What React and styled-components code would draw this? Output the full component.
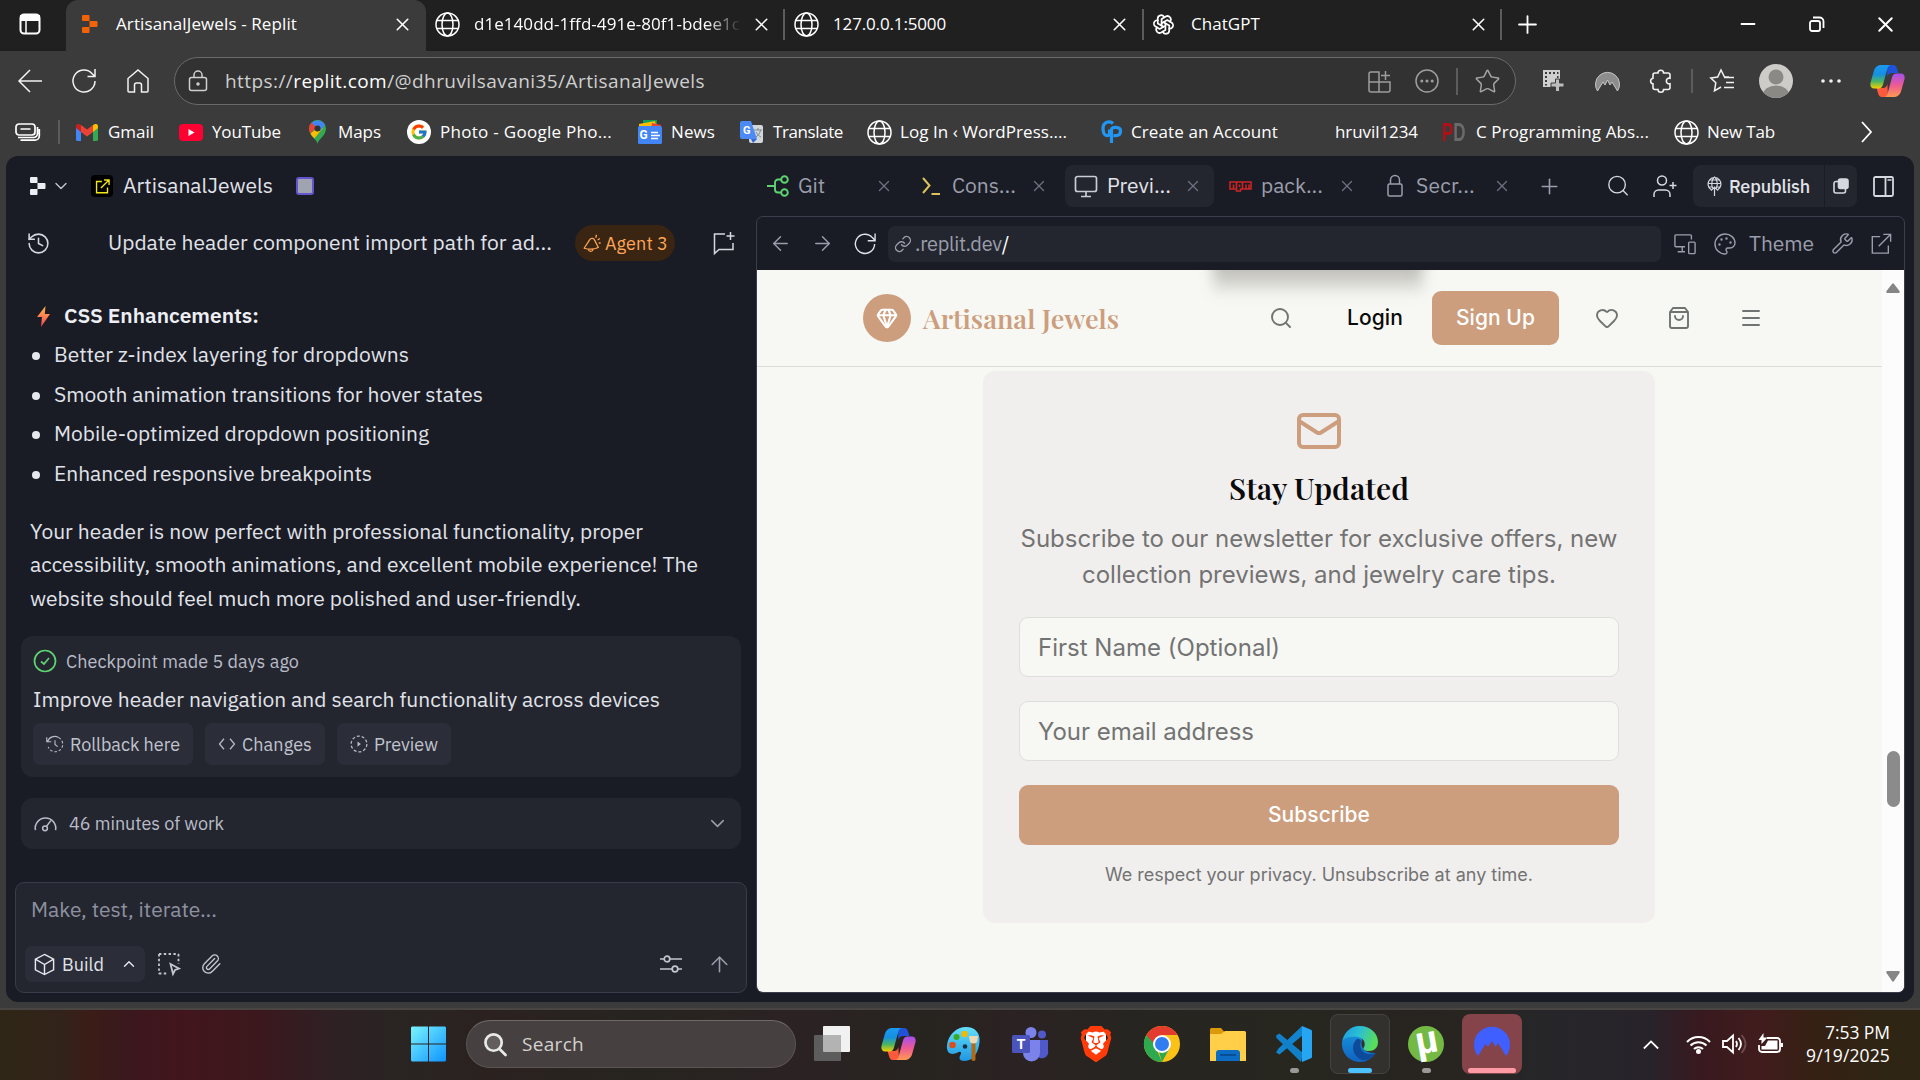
import React, { useLayoutEffect, useRef, useState } from "react";
import styled, { createGlobalStyle } from "styled-components";
import {
  ArrowLeft, ArrowRight, ArrowUp, ChevronDown, ChevronUp, Gem, Heart, History,
  Mail, Menu, Minus, Palette, Paperclip, Plus, Search, Star, Wrench, X, Link,
} from "lucide-react";
import { FcGoogle } from "react-icons/fc";
import { TbBrandOpenai } from "react-icons/tb";
import { SiBrave } from "react-icons/si";

const ui = `"Segoe UI", "Open Sans", "Noto Sans", sans-serif`;
const plex = `"IBM Plex Sans", Roboto, sans-serif`;
const inter = `Inter, "Liberation Sans", sans-serif`;
const serif = `"Playfair Display", "Liberation Serif", serif`;

const GlobalStyle = createGlobalStyle`
  * { box-sizing: border-box; }
  html, body { margin: 0; width: 1920px; height: 1080px; overflow: hidden; background: #3b3b3b; }
  svg { display: block; flex: none; }
`;

/* ---------- text that keeps its measured width ---------- */
const LabelText = styled.span`
  display: block;
  flex: none;
  width: ${(p) => p.$w}px;
  margin-left: ${(p) => p.$ml || 0}px;
  font-family: ${(p) => p.$font || ui};
  font-size: ${(p) => p.$size || 17}px;
  font-weight: ${(p) => p.$weight || 400};
  color: ${(p) => p.$color || "#fff"};
  line-height: 1.3;
  white-space: pre;
  position: relative;
  top: ${(p) => p.$dy || 0}px;
`;

function Label({ w, ml, font, size, weight, color, dy, children }) {
  const ref = useRef(null);
  const [spacing, setSpacing] = useState(0);
  useLayoutEffect(() => {
    const range = document.createRange();
    range.selectNodeContents(ref.current);
    const natural = range.getBoundingClientRect().width;
    const count = ref.current.textContent.length;
    setSpacing((w - natural) / count);
  }, [w]);
  return (
    <LabelText ref={ref} $w={w} $ml={ml} $font={font} $size={size} $weight={weight} $color={color} $dy={dy}
      style={{ letterSpacing: `${spacing}px` }}>
      {children}
    </LabelText>
  );
}

/* ---------- shared parts ---------- */
const Glyph = styled.span`
  display: flex;
  flex: none;
  align-items: center;
  justify-content: center;
  width: ${(p) => p.$w}px;
  height: ${(p) => p.$h || p.$w}px;
  margin-left: ${(p) => p.$ml || 0}px;
  color: ${(p) => p.$color || "inherit"};
`;
const Line = styled.svg.attrs((p) => ({ viewBox: p.viewBox || "0 0 24 24", fill: "none", stroke: "currentColor" }))`
  width: ${(p) => p.$s || 24}px;
  height: ${(p) => p.$h || p.$s || 24}px;
  stroke-width: ${(p) => p.$sw || 1.5};
  overflow: visible;
`;
const Rule = styled.i`
  flex: none;
  width: 2px;
  height: ${(p) => p.$h}px;
  margin-left: ${(p) => p.$ml}px;
  background: #5c5c5c;
`;

const Globe = () => (
  <Line $s={25} $sw={1.5} viewBox="0 0 25 25">
    <circle cx="12.5" cy="12.5" r="11.5" />
    <ellipse cx="12.5" cy="12.5" rx="5.5" ry="11.5" />
    <path d="M2 8.5h21M2 16.5h21" />
  </Line>
);
const ReplitMark = () => (
  <svg width="16" height="18" viewBox="0 0 16 18" fill="currentColor">
    <path d="M0 1a1 1 0 0 1 1-1h5.500a1 1 0 0 1 1 1v5H1a1 1 0 0 1-1-1zM7.500 6H14.500a1 1 0 0 1 1 1v4a1 1 0 0 1-1 1H7.500zM0 13a1 1 0 0 1 1-1h6.500v5a1 1 0 0 1-1 1H1a1 1 0 0 1-1-1z" />
  </svg>
);
const CopilotMark = () => (
  <svg width="35" height="32" viewBox="0 0 35 32">
    <defs>
      <linearGradient id="cpA" x1="0" y1="0" x2="0" y2="1">
        <stop offset="0" stopColor="#1b9af0" /><stop offset=".4" stopColor="#1590e0" /><stop offset=".7" stopColor="#4cb562" /><stop offset="1" stopColor="#f5d000" />
      </linearGradient>
      <linearGradient id="cpB" x1="0" y1="0" x2="0" y2="1">
        <stop offset="0" stopColor="#a34ff0" /><stop offset=".5" stopColor="#ee5a94" /><stop offset="1" stopColor="#ff9a50" />
      </linearGradient>
    </defs>
    <path d="M17 0h6c2.500 0 3.500 1.500 4.200 4l1.300 4h-6c-3 0-4.500 1.500-5.200 4z" fill="#1f52d6" />
    <path d="M18 32h-6c-2.500 0-3.200-1.500-4-4l-1.500-5h6.500c2.500 0 3.600-1.500 4.400-4z" fill="#fb5a3c" />
    <path d="M12 0h9c-2 0-3 1.500-3.600 3.600L13 19.500c-.8 2.500-2 4-4.500 4H4.200C.8 23.500-.2 20.800.6 17.500L4 5.500C5.200 2 7.500 0 12 0z" fill="url(#cpA)" />
    <path d="M23 32h-9c2 0 3-1.500 3.600-3.600L22 12.500c.8-2.500 2-4 4.500-4h4.300c3.400 0 4.400 2.700 3.600 6L31 26.500C29.800 30 27.500 32 23 32z" fill="url(#cpB)" />
  </svg>
);

/* ---------- browser chrome ---------- */
const Screen = styled.div`
  display: flex;
  flex-direction: column;
  width: 1920px;
  height: 1080px;
  overflow: hidden;
  color: #fff;
`;
const TabStrip = styled.header`
  display: flex;
  align-items: center;
  height: 51px;
  flex: none;
  padding-left: 18px;
  padding-bottom: 3px;
  background: #202020;
`;
const ActiveTab = styled.div`
  display: flex;
  align-items: center;
  align-self: flex-start;
  width: 360px;
  height: 51px;
  flex: none;
  margin-left: 24px;
  padding: 0 0 3px 16px;
  background: #3b3b3b;
  border-radius: 12px 12px 0 0;
`;
const FadeText = styled.div`
  flex: none;
  width: 270px;
  margin-left: 14px;
  mask-image: linear-gradient(90deg, #000 86%, transparent 99%);
`;
const Toolbar = styled.div`
  display: flex;
  align-items: center;
  height: 60px;
  flex: none;
  padding-left: 18px;
  color: #f2f2f2;
`;
const AddressBar = styled.div`
  display: flex;
  align-items: center;
  width: 1342px;
  height: 48px;
  margin-left: 24px;
  padding-left: 13px;
  border: 1.500px solid #6a6a6a;
  border-radius: 24px;
  background: #323232;
  color: #d0d0d0;
`;
const UrlPart = styled.span`color: ${(p) => (p.$strong ? "#fff" : "#cfcfcf")};`;
const Avatar = styled.span`
  flex: none;
  width: 34px;
  height: 34px;
  margin-left: 25px;
  border-radius: 50%;
  overflow: hidden;
  background: #cdccc9;
`;
const BookmarkBar = styled.div`
  display: flex;
  align-items: center;
  height: 42px;
  flex: none;
  padding-left: 15px;
  margin-bottom: 3px;
`;
const PdMark = styled.b`
  flex: none;
  width: 25px;
  margin-left: 24px;
  font: 900 25px/24px "Liberation Sans", sans-serif;
  color: #b01016;
  transform: scaleX(.68);
  transform-origin: 0 50%;
  span { color: #6a6a6a; }
`;

function BrowserTabs() {
  const close = (ml) => <Glyph $w={15} $ml={ml}><X size={21} strokeWidth={1.800} /></Glyph>;
  return (
    <TabStrip>
      <Glyph $w={24}>
        <Line $s={22} $sw={2} viewBox="0 0 22 22"><rect x="1.500" y="1.500" width="19" height="19" rx="3.500" /><path d="M2 3h18v4H2z" fill="currentColor" /><path d="M7 7v13" strokeWidth="1.500" /></Line>
      </Glyph>
      <ActiveTab>
        <Glyph $w={16} $color="#f26207"><ReplitMark /></Glyph>
        <Label ml={18} w={181}>ArtisanalJewels - Replit</Label>
        {close(98)}
      </ActiveTab>
      <Glyph $w={25} $ml={9}><Globe /></Glyph>
      <FadeText><Label w={266}>d1e140dd-1ffd-491e-80f1-bdee1c</Label></FadeText>
      {close(10)}
      <Rule $ml={14} $h={31} />
      <Glyph $w={25} $ml={9}><Globe /></Glyph>
      <Label ml={14} w={113}>127.0.0.1:5000</Label>
      {close(166)}
      <Rule $ml={15} $h={31} />
      <Glyph $w={24} $ml={7}><TbBrandOpenai size={23} strokeWidth={1.800} /></Glyph>
      <Label ml={16} w={69}>ChatGPT</Label>
      {close(211)}
      <Rule $ml={14} $h={31} />
      <Glyph $w={24} $ml={13}><Plus size={29} strokeWidth={1.500} /></Glyph>
      <Glyph $w={16} $ml={201}><Minus size={22} strokeWidth={2.200} /></Glyph>
      <Glyph $w={16} $ml={53}>
        <Line $s={16} $sw={1.800} viewBox="0 0 16 16"><rect x="1" y="5" width="10" height="10" rx="2" /><path d="M4 1.500h6.500a4 4 0 0 1 4 4V12" /></Line>
      </Glyph>
      <Glyph $w={16} $ml={52}><X size={25} strokeWidth={1.900} /></Glyph>
    </TabStrip>
  );
}

function AddressRow() {
  return (
    <Toolbar>
      <Glyph $w={24}><Line $s={24}><path d="M24 12H1M12 1 1 12l11 11" /></Line></Glyph>
      <Glyph $w={24} $ml={30}><Line $s={24}><path d="M23 12a11 11 0 1 1-2.800-7.300L23 7.500M23 0v7.500h-7.500" /></Line></Glyph>
      <Glyph $w={24} $ml={30}><Line $s={24}><path d="M2 22V9.500L12 1l10 8.500V22a1 1 0 0 1-1 1h-5.500v-7a2 2 0 0 0-2-2h-3a2 2 0 0 0-2 2v7H3a1 1 0 0 1-1-1z" /></Line></Glyph>
      <AddressBar>
        <Glyph $w={20}>
          <Line $s={20} $h={22} viewBox="0 0 20 22"><rect x="1.500" y="7.500" width="17" height="13" rx="2" /><path d="M6 7.500V5a4 4 0 0 1 8 0v2.500" /><circle cx="10" cy="14" r="1" fill="currentColor" /></Line>
        </Glyph>
        <Label ml={17} w={480} size={19}>
          <UrlPart>https://</UrlPart><UrlPart $strong>replit.com</UrlPart><UrlPart>/@dhruvilsavani35/ArtisanalJewels</UrlPart>
        </Label>
        <Glyph $w={24} $ml={662} $color="#9d9d9d">
          <Line $s={23} viewBox="0 0 23 23"><path d="M3 2h8v20H3a2 2 0 0 1-2-2V4a2 2 0 0 1 2-2zM1 12h21v8a2 2 0 0 1-2 2h-9M17.500 1v9M13 5.500h9" /></Line>
        </Glyph>
        <Glyph $w={24} $ml={24} $color="#9d9d9d">
          <Line $s={24}><circle cx="12" cy="12" r="11" /><g fill="currentColor"><circle cx="6.800" cy="12" r=".8" /><circle cx="12" cy="12" r=".8" /><circle cx="17.200" cy="12" r=".8" /></g></Line>
        </Glyph>
        <Rule $ml={17} $h={27} />
        <Glyph $w={24} $ml={17} $color="#a5a5a5"><Star size={27} strokeWidth={1.300} /></Glyph>
      </AddressBar>
      <Glyph $w={22} $ml={27}>
        <svg width="22" height="22" viewBox="0 0 22 22">
          <path d="M0 0h17v9h-5v4H9v4H0z" fill="#cfcfcf" />
          <path d="M2 2h2v2H2zM6 2h2v2H6zM10 2h2v2h-2zM14 2h1.500v2H14zM2 6h2v2H2zM2 10h2v2H2zM2 14h2v1.500H2zM14 6h1.500v2H14z" fill="#3b3b3b" />
          <path d="M12.500 9h4v4H21v4h-4.500v4.500h-4V17H8v-4h4.500z" fill="#bdbdbd" stroke="#3b3b3b" />
        </svg>
      </Glyph>
      <Glyph $w={25} $ml={30}>
        <svg width="25" height="22" viewBox="0 0 25 22"><path d="M2.500 21a12 12 0 1 1 20 0L17 12l-2 3-2.500-5-2.500 5-2-3z" fill="#8d8d8d" stroke="#c6c6c6" /></svg>
      </Glyph>
      <Glyph $w={24} $ml={29}>
        <Line $s={24} $sw={1.600}><path d="M9 4a2.800 2.800 0 0 1 5.600 0H19a2 2 0 0 1 2 2v3.200a2.900 2.900 0 1 0 0 5.600V18.500a2 2 0 0 1-2 2H14.600a2.800 2.800 0 0 1-5.600 0H6a2 2 0 0 1-2-2V14.900a2.900 2.900 0 0 1 0-5.700V6a2 2 0 0 1 2-2z" /></Line>
      </Glyph>
      <Rule $ml={18} $h={24} />
      <Glyph $w={24} $ml={17}>
        <Line $s={24}><path d="M19 8h-4.500L11 1 7.700 8 .8 9l5 4.800-1.300 8L11 18M14 8.500h10M16 13.500h8M14 18.500h10" /></Line>
      </Glyph>
      <Avatar><svg width="34" height="34"><circle cx="17" cy="13" r="7.500" fill="#8b8985" /><ellipse cx="17" cy="31" rx="13" ry="9.500" fill="#8b8985" /></svg></Avatar>
      <Glyph $w={20} $ml={28}><svg width="20" height="4" fill="currentColor"><circle cx="2" cy="2" r="1.800" /><circle cx="10" cy="2" r="1.800" /><circle cx="18" cy="2" r="1.800" /></svg></Glyph>
      <Glyph $w={35} $ml={29}><CopilotMark /></Glyph>
    </Toolbar>
  );
}

function Bookmarks() {
  return (
    <BookmarkBar>
      <Glyph $w={25}>
        <Line $s={25} $h={18} $sw={1.700} viewBox="0 0 25 18"><rect x="1" y="1" width="19" height="11" rx="3" /><path d="M5.500 6h10M3 14.500h15.500a4 4 0 0 0 4-4V4M5.500 17.200H20a4.300 4.300 0 0 0 4.300-4.200V6" /></Line>
      </Glyph>
      <Rule $ml={18} $h={24} />
      <Glyph $w={22} $ml={16}>
        <svg width="22" height="17" viewBox="0 0 22 17"><path d="M0 2.500v13A1.500 1.500 0 0 0 1.500 17H5V6z" fill="#4285f4" /><path d="M22 2.500v13a1.500 1.500 0 0 1-1.500 1.500H17V6z" fill="#34a853" /><path d="M17 1v7l5-4V2c0-2-2.500-2.600-4-1.500z" fill="#fbbc04" /><path d="M5 8V1l6 4.500L17 1v7l-6 4.500z" fill="#ea4335" /><path d="M0 4l5 4V1L4 .5C2.500-.6 0 0 0 2z" fill="#c5221f" /></svg>
      </Glyph>
      <Label ml={10} w={46}>Gmail</Label>
      <Glyph $w={24} $ml={25}><svg width="24" height="17"><rect width="24" height="17" rx="4" fill="#ff0033" /><path d="M9.500 5v7l6-3.500z" fill="#fff" /></svg></Glyph>
      <Label ml={9} w={69}>YouTube</Label>
      <Glyph $w={17} $h={24} $ml={28}>
        <svg width="17" height="24" viewBox="0 0 17 24"><path d="M8.500 24C8 19 0 16 0 8.500A8.500 8.500 0 0 1 17 8.500C17 16 9 19 8.500 24z" fill="#34a853" /><path d="M1.500 13.500 11 3l-8-.8A8.500 8.500 0 0 0 1.500 13.500z" fill="#ea4335" /><path d="M1.500 13.500c1 2 2.500 3.500 3.800 5L14 8 11 6z" fill="#fbbc04" /><path d="M2.500 3A8.500 8.500 0 0 1 16 5l-5 6-6-6z" fill="#4285f4" /><circle cx="8.500" cy="8.500" r="3" fill="#333" /></svg>
      </Glyph>
      <Label ml={12} w={43}>Maps</Label>
      <Glyph $w={24} $ml={26}><svg width="24" height="24"><circle cx="12" cy="12" r="12" fill="#fff" /><g transform="translate(3 3)"><FcGoogle size={18} /></g></svg></Glyph>
      <Label ml={9} w={172}>Photo - Google Pho...</Label>
      <Glyph $w={24} $ml={26}>
        <svg width="24" height="24"><path d="M5 0h14v8H5z" fill="#0f9d58" /><path d="M1 4 17 1l2 8H1z" fill="#fbbc04" /><path d="m14 3 9 2-1 5h-9z" fill="#ea4335" /><rect y="6" width="24" height="18" rx="1.500" fill="#4285f4" /><text x="1.500" y="19" fontFamily="Roboto" fontWeight="700" fontSize="12" fill="#fff">G</text><path d="M13 12.500h7M13 15.500h9M13 18.500h7" stroke="#fff" strokeWidth="1.600" /></svg>
      </Glyph>
      <Label ml={9} w={44}>News</Label>
      <Glyph $w={24} $ml={25}>
        <svg width="24" height="24"><rect x="9" y="5" width="14" height="18" rx="2" fill="#d4d7da" /><path d="M2 1h9l6 18H2a2 2 0 0 1-2-2V3a2 2 0 0 1 2-2z" fill="#4c8bf5" /><path d="m11 19 6 0-4 4z" fill="#3367d6" /><text x="3" y="14" fontFamily="Roboto" fontWeight="700" fontSize="11" fill="#fff">G</text><path d="M14 10h8M18 8v2M20.500 10c-.5 4-3 6-5 7M16 12c1 2 3 4 5 5" stroke="#7b8794" fill="none" /></svg>
      </Glyph>
      <Label ml={9} w={70}>Translate</Label>
      <Glyph $w={25} $ml={24}><Globe /></Glyph>
      <Label ml={8} w={167}>Log In ‹ WordPress....</Label>
      <Glyph $w={22} $ml={34} $color="#2196f3">
        <Line $s={22} $h={24} $sw={3.200} viewBox="0 0 22 24"><path d="M12 3.500C9 .5 2 1.500 2 8.500s4 8 6.500 6.500V9.500" /><path d="M10.500 23V9.500c0-3 9-3 9 1.500s-3.500 5-7 4.500" /></Line>
      </Glyph>
      <Label ml={8} w={147}>Create an Account</Label>
      <Label ml={57} w={83}>hruvil1234</Label>
      <PdMark>P<span>D</span></PdMark>
      <Label ml={9} w={173}>C Programming Abs...</Label>
      <Glyph $w={25} $ml={25}><Globe /></Glyph>
      <Label ml={8} w={68}>New Tab</Label>
      <Glyph $w={12} $ml={86}><Line $s={12} $h={22} $sw={1.800} viewBox="0 0 12 22"><path d="m1 1 9 10-9 10" /></Line></Glyph>
    </BookmarkBar>
  );
}

/* ---------- workspace ---------- */
const Workspace = styled.main`
  display: flex;
  flex-direction: column;
  width: 1908px;
  height: 846px;
  flex: none;
  margin: 0 6px;
  border-radius: 12px;
  background: #1a1c25;
  color: #d6d8e0;
  overflow: hidden;
`;
const WorkspaceBar = styled.div`
  display: flex;
  align-items: center;
  height: 60px;
  flex: none;
  padding-left: 24px;
`;
const AppBadge = styled.span`
  display: flex;
  align-items: center;
  justify-content: center;
  flex: none;
  width: 22px;
  height: 22px;
  margin-left: 24px;
  border-radius: 4px;
  background: #000;
  color: #f5e616;
`;
const PurpleBox = styled.i`
  flex: none;
  width: 18px;
  height: 18px;
  margin-left: 23px;
  border: 2px solid #6554d0;
  border-radius: 3px;
  background: #a0a4b0;
`;
const ToolTab = styled.div`
  display: flex;
  align-items: center;
  flex: none;
  width: 149px;
  height: 42px;
  margin-left: 21px;
  padding-left: 9px;
  border-radius: 8px;
  background: #24262f;
`;
const Republish = styled.div`
  display: flex;
  flex: none;
  height: 42px;
  margin-left: 16px;
  gap: 1px;
  border-radius: 8px;
  overflow: hidden;
`;
const RepublishPart = styled.div`
  display: flex;
  align-items: center;
  width: ${(p) => p.$w}px;
  padding-left: ${(p) => p.$pl}px;
  background: #24262f;
`;
const Split = styled.div`
  display: flex;
  flex: 1;
  min-height: 0;
`;
const Chat = styled.section`
  display: flex;
  flex-direction: column;
  width: 750px;
  flex: none;
`;
const ChatHead = styled.div`
  display: flex;
  align-items: center;
  height: 54px;
  flex: none;
  padding-left: 20px;
`;
const AgentPill = styled.div`
  display: flex;
  align-items: center;
  width: 100px;
  height: 36px;
  margin-left: 23px;
  padding-left: 7px;
  border-radius: 18px;
  background: #3a2412;
  color: #ffa657;
`;
const Heading = styled.div`
  display: flex;
  align-items: center;
  height: 34px;
  flex: none;
  margin: 29px 0 2px 31px;
`;
const Bullets = styled.ul`
  display: flex;
  flex: none;
  flex-direction: column;
  margin: 0 0 21px;
  padding: 0 0 0 48px;
  list-style: none;
`;
const Bullet = styled.li`
  display: flex;
  align-items: center;
  height: 39.6px;
  &::before {
    content: "";
    width: 8px;
    height: 8px;
    margin: 3px 14px 0 -22px;
    border-radius: 50%;
    background: #e6e8ee;
  }
`;
const Paragraph = styled.div`
  display: grid;
  flex: none;
  grid-auto-rows: 33.600px;
  align-items: center;
  margin: 0 0 20.800px 24px;
`;
const Card = styled.div`
  width: 720px;
  height: ${(p) => p.$h}px;
  flex: none;
  margin: 0 0 21px 15px;
  padding: 0 12px;
  border-radius: 12px;
  background: #24262f;
`;
const CardRow = styled.div`
  display: flex;
  align-items: center;
  height: ${(p) => p.$h}px;
  padding-top: ${(p) => p.$pt || 0}px;
  gap: ${(p) => p.$gap || 0}px;
`;
const ActionButton = styled.div`
  display: flex;
  align-items: center;
  width: ${(p) => p.$w}px;
  height: 42px;
  padding-left: 12px;
  border-radius: 7px;
  background: #2b2d39;
  color: #b9bcc8;
`;
const Composer = styled.div`
  width: 732px;
  height: 111px;
  flex: none;
  margin: 12px 0 0 9px;
  padding: 13px 9px 0;
  border: 1.500px solid #393c4a;
  border-radius: 9px;
  background: #24262f;
`;
const ComposerTools = styled.div`
  display: flex;
  align-items: center;
  height: 36px;
  margin-top: 23px;
  color: #c3c6d0;
`;
const BuildButton = styled.div`
  display: flex;
  align-items: center;
  width: 120px;
  height: 36px;
  padding-left: 8px;
  border-radius: 7px;
  background: #2b2d39;
  color: #e8e9ef;
`;

const muted = "#9a9eac";
const PlexLabel = (p) => <Label font={plex} size={21} color="#e1e3ea" {...p} />;
const TabClose = ({ ml }) => <Glyph $w={11} $ml={ml} $color="#6d7180"><X size={18} strokeWidth={1.700} /></Glyph>;
const ExternalMark = ({ s = 22, sw = 1.5 }) => (
  <Line $s={s} $sw={sw}><path d="M11 4H2.500v18H20v-8.500M14.500 1.500H22.500V9.500M22 2 9.500 14.500" /></Line>
);

function WorkspaceHeader() {
  return (
    <WorkspaceBar>
      <Glyph $w={16} $color="#eceef4"><ReplitMark /></Glyph>
      <Glyph $w={12} $ml={9} $color="#c4c7d0"><ChevronDown size={20} strokeWidth={1.600} /></Glyph>
      <AppBadge><ExternalMark s={15} sw={2.200} /></AppBadge>
      <PlexLabel ml={10} w={150}>ArtisanalJewels</PlexLabel>
      <PurpleBox />
      <Glyph $w={22} $ml={453} $color="#5fd372">
        <Line $s={22} viewBox="0 0 22 22" $sw={1.900}><path d="M0 11h8M14 4.500h-3a3 3 0 0 0-3 3v7a3 3 0 0 0 3 3h3" /><circle cx="17.500" cy="4.500" r="3.300" /><circle cx="17.500" cy="17.500" r="3.300" /></Line>
      </Glyph>
      <PlexLabel ml={9} w={27} color={muted}>Git</PlexLabel>
      <TabClose ml={53} />
      <Glyph $w={18} $ml={33} $color="#dcc25c"><Line $s={18} $sw={2} viewBox="0 0 18 18"><path d="m1 1 6.500 7.500L1 16M9.500 17H18" /></Line></Glyph>
      <PlexLabel ml={12} w={64} color={muted}>Cons...</PlexLabel>
      <TabClose ml={17} />
      <ToolTab>
        <Glyph $w={24} $color="#c9ccd6"><Line $s={24} $sw={1.700}><path d="M3.500 2.500h17a2 2 0 0 1 2 2v11a2 2 0 0 1-2 2h-17a2 2 0 0 1-2-2v-11a2 2 0 0 1 2-2zM12 18v4M7 22.500h10" /></Line></Glyph>
        <PlexLabel ml={9} w={64}>Previ...</PlexLabel>
        <TabClose ml={16} />
      </ToolTab>
      <Glyph $w={23} $h={12} $ml={15} $color="#cb2424"><Line $s={23} $h={11} $sw={1.600} viewBox="0 0 23 11"><path d="M1 1h21v7H11.500v2H7.500V8H1zM4.500 8V3.500M7.500 8V1M10.500 3.500v2.500M13.500 8V1M17 8V3.500M20 8V3.500" /></Line></Glyph>
      <PlexLabel ml={9} w={62} color={muted}>pack...</PlexLabel>
      <TabClose ml={18} />
      <Glyph $w={16} $h={22} $ml={35} $color={muted}><Line $s={16} $h={22} viewBox="0 0 16 22"><rect x="1" y="9" width="14" height="12" rx="1.500" /><path d="M3.500 9V5a4.500 4.500 0 0 1 9 0v4" /></Line></Glyph>
      <PlexLabel ml={13} w={59} color={muted}>Secr...</PlexLabel>
      <TabClose ml={21} />
      <Glyph $w={18} $ml={33} $color={muted}><Plus size={25} strokeWidth={1.500} /></Glyph>
      <Glyph $w={22} $ml={49}><Line $s={22}><circle cx="11" cy="10.500" r="9" /><path d="m17.500 17 5 5" /></Line></Glyph>
      <Glyph $w={24} $ml={24}><Line $s={24}><circle cx="9" cy="6.500" r="4.500" /><path d="M1 23v-2.500a4.500 4.500 0 0 1 4.500-4.500h7A4.500 4.500 0 0 1 17 20.500V23M20 8v7M16.500 11.500h7" /></Line></Glyph>
      <Republish>
        <RepublishPart $w={131} $pl={14}>
          <Glyph $w={15}><Line $s={15} $h={20} $sw={1.200} viewBox="0 0 15 20"><path d="M4 13.500a6.500 6.500 0 1 1 7 0M1 7.500h13M2.500 4h10M2.500 11h3M9.500 11h3M5.500 12C4 8 5 3 7.500 1c2.500 2 3.500 7 2 11M7.500 20V11M4 14.500l3.500-3.500 3.500 3.500" /></Line></Glyph>
          <PlexLabel ml={7} w={81} size={18} weight={500} dy={1}>Republish</PlexLabel>
        </RepublishPart>
        <RepublishPart $w={32} $pl={8}>
          <Line $s={16} $sw={1.600} viewBox="0 0 16 16"><path d="M5 3.500H3a2 2 0 0 0-2 2V13a2 2 0 0 0 2 2h7.500a2 2 0 0 0 2-2v-2" /><rect x="5.500" y="1" width="9.500" height="9.500" rx="2" fill="currentColor" /></Line>
        </RepublishPart>
      </Republish>
      <Glyph $w={22} $ml={15}><Line $s={21} $sw={1.800} viewBox="0 0 21 21"><rect x="1" y="1" width="19" height="19" rx="1.500" /><path d="M12.500 1v19" /><path d="M14.500 4h4" strokeWidth="1.400" /></Line></Glyph>
    </WorkspaceBar>
  );
}

function ChatPane() {
  return (
    <Chat>
      <ChatHead>
        <Glyph $w={24}><History size={25} strokeWidth={1.500} /></Glyph>
        <PlexLabel ml={58} w={444}>Update header component import path for ad...</PlexLabel>
        <AgentPill>
          <Glyph $w={19}><Line $s={18} $sw={1.700} strokeLinejoin="round"><path d="M1.500 19 9 7.500a3.600 3.600 0 0 1 6.600 1L20.500 18q-9 4-19 1zM7 20.500c1 3.500 5.500 3.500 6.500 0M17 5l1-4M19.500 8l3-2M21 12h2.500" /></Line></Glyph>
          <Label font={plex} ml={4} w={63} size={18} color="#ffa657" dy={1}>Agent 3</Label>
        </AgentPill>
        <Glyph $w={22} $ml={38}><Line $s={22} $h={24} viewBox="0 0 22 24"><path d="M12 3H1.500v19.500L6 18.500H20V12M17.500 1v8M13.500 5h8" /></Line></Glyph>
      </ChatHead>
      <Heading>
        <svg width="13" height="21" viewBox="0 0 13 21"><defs><linearGradient id="bolt" x1="0" y1="0" x2="0" y2="1"><stop offset="0" stopColor="#ffb83e" /><stop offset=".5" stopColor="#ff8052" /><stop offset="1" stopColor="#ef3f4c" /></linearGradient></defs><path d="M8.500 0 0 11h5L4 21l9-13H7.800z" fill="url(#bolt)" /></svg>
        <PlexLabel ml={14} w={195} weight={600} color="#edeff4">CSS Enhancements:</PlexLabel>
      </Heading>
      <Bullets>
        <Bullet><PlexLabel w={355}>Better z-index layering for dropdowns</PlexLabel></Bullet>
        <Bullet><PlexLabel w={429}>Smooth animation transitions for hover states</PlexLabel></Bullet>
        <Bullet><PlexLabel w={375}>Mobile-optimized dropdown positioning</PlexLabel></Bullet>
        <Bullet><PlexLabel w={318}>Enhanced responsive breakpoints</PlexLabel></Bullet>
      </Bullets>
      <Paragraph>
        <PlexLabel w={613}>Your header is now perfect with professional functionality, proper</PlexLabel>
        <PlexLabel w={668}>accessibility, smooth animations, and excellent mobile experience! The</PlexLabel>
        <PlexLabel w={551}>website should feel much more polished and user-friendly.</PlexLabel>
      </Paragraph>
      <Card $h={141}>
        <CardRow $h={46} $pt={5}>
          <Glyph $w={24} $color="#5fd372"><Line $s={24} $sw={1.700}><circle cx="12" cy="12" r="10.500" /><path d="m8 12.500 3 2.500 5-6" /></Line></Glyph>
          <PlexLabel ml={9} w={233} size={18} color="#b9bcc8">Checkpoint made 5 days ago</PlexLabel>
        </CardRow>
        <CardRow $h={36}><PlexLabel w={627}>Improve header navigation and search functionality across devices</PlexLabel></CardRow>
        <CardRow $h={47} $pt={5} $gap={12}>
          <ActionButton $w={160}><Glyph $w={19}><Line $s={18}><path d="M1 3v6h6M2 9a10 10 0 0 1 15-5.500" /><path d="M17 3.500A10 10 0 1 1 3 16" strokeDasharray="3.500 2.500" /><path d="M12 7v5.500l3.500 3" /></Line></Glyph><PlexLabel ml={6} w={110} size={18} color="#c1c4ce" dy={1}>Rollback here</PlexLabel></ActionButton>
          <ActionButton $w={120}><Glyph $w={19}><Line $s={18} $sw={1.700}><path d="M8 5 2 12l6 7M16 5l6 7-6 7" /></Line></Glyph><PlexLabel ml={6} w={70} size={18} color="#c1c4ce" dy={1}>Changes</PlexLabel></ActionButton>
          <ActionButton $w={114}><Glyph $w={19}><Line $s={18} $sw={1.700}><circle cx="12" cy="12" r="10.500" strokeDasharray="4 2.600" /><path d="M10 8.500v7l4.500-3.500z" fill="currentColor" stroke="none" /></Line></Glyph><PlexLabel ml={6} w={64} size={18} color="#c1c4ce" dy={1}>Preview</PlexLabel></ActionButton>
        </CardRow>
      </Card>
      <Card $h={51}>
        <CardRow $h={51}>
          <Glyph $w={24} $color="#b9bcc8"><Line $s={23} $sw={1.600}><path d="M1.500 19A10.700 10.700 0 1 1 22.500 19M13 15l4.500-6" /><circle cx="11.500" cy="17" r="2.500" /></Line></Glyph>
          <PlexLabel ml={12} w={155} size={18} color="#b9bcc8" dy={0.5}>46 minutes of work</PlexLabel>
          <Glyph $w={16} $ml={485} $color={muted}><ChevronDown size={23} strokeWidth={1.500} /></Glyph>
        </CardRow>
      </Card>
      <Composer>
        <PlexLabel ml={6} w={186} color="#8d91a0">Make, test, iterate...</PlexLabel>
        <ComposerTools>
          <BuildButton>
            <Glyph $w={22}><Line $s={23}><path d="M12 1.500 21.500 6.500v11L12 22.500 2.500 17.500v-11zM2.500 6.500 12 12l9.500-5.500M12 12v10.500" /></Line></Glyph>
            <PlexLabel ml={7} w={42} size={18}>Build</PlexLabel>
            <Glyph $w={12} $ml={19}><ChevronUp size={18} strokeWidth={1.800} /></Glyph>
          </BuildButton>
          <Glyph $w={22} $ml={13}><Line $s={22} $sw={1.800} viewBox="0 0 22 22"><path d="M1 1h19.500M1 1v20M20.500 1v10M1 20.500h9.500" strokeDasharray="2.400 2.400" /><path d="m12.500 11 2.500 10 2-4 4-1.500z" /></Line></Glyph>
          <Glyph $w={22} $ml={20}><Paperclip size={22} strokeWidth={1.500} /></Glyph>
          <Glyph $w={22} $ml={438}><Line $s={22} $sw={1.700} viewBox="0 0 22 20"><path d="M0 5h4M10 5h12M0 15h12M18 15h4" /><circle cx="7" cy="5" r="2.800" /><circle cx="15" cy="15" r="2.800" /></Line></Glyph>
          <Glyph $w={18} $ml={28} $color={muted}><ArrowUp size={25} strokeWidth={1.500} /></Glyph>
        </ComposerTools>
      </Composer>
    </Chat>
  );
}

/* ---------- preview pane ---------- */
const PreviewPane = styled.section`
  display: flex;
  flex-direction: column;
  width: 1149px;
  height: 777px;
  flex: none;
  border: 1px solid #3b3e4d;
  border-radius: 7px;
  overflow: hidden;
`;
const PreviewBar = styled.div`
  display: flex;
  align-items: center;
  height: 53px;
  flex: none;
  padding-left: 12px;
  color: ${muted};
`;
const PreviewUrl = styled.div`
  display: flex;
  align-items: center;
  width: 773px;
  height: 36px;
  margin-left: 12px;
  padding-left: 6px;
  border-radius: 7px;
  background: #24262f;
`;
const Viewport = styled.div`
  display: flex;
  flex: 1;
  background: #f7f8f3;
`;
const Page = styled.div`
  position: relative;
  display: flex;
  flex-direction: column;
  align-items: center;
  width: 1125px;
  overflow: hidden;
`;
const Haze = styled.i`
  position: absolute;
  left: 456px;
  top: -16px;
  width: 210px;
  height: 40px;
  background: linear-gradient(rgba(70, 66, 60, .32) 40%, rgba(70, 66, 60, .04));
  filter: blur(7px);
`;
const SiteHeader = styled.div`
  display: flex;
  align-items: center;
  align-self: stretch;
  height: 97px;
  flex: none;
  padding-left: 106px;
  border-bottom: 1px solid #dcdeda;
  color: #6f7371;
`;
const LogoDisc = styled.span`
  display: flex;
  align-items: center;
  justify-content: center;
  width: 48px;
  height: 48px;
  border-radius: 50%;
  background: #cc9e7e;
  color: #fff;
`;
const SignUp = styled.div`
  display: flex;
  align-items: center;
  justify-content: center;
  width: 127px;
  height: 54px;
  margin-left: 29px;
  border-radius: 9px;
  background: #cc9e7e;
`;
const Newsletter = styled.div`
  display: flex;
  flex-direction: column;
  align-items: center;
  width: 672px;
  height: 552px;
  flex: none;
  margin: 4px 1px 0 0;
  padding: 36px 36px 0;
  border-radius: 12px;
  background: #f1efee;
`;
const Title = styled.div`
  display: flex;
  align-items: center;
  height: 42px;
  margin-top: 12px;
`;
const Copy = styled.div`
  display: grid;
  grid-auto-rows: 36px;
  align-items: center;
  justify-items: center;
  margin: 12px 0 24px;
`;
const Field = styled.div`
  display: flex;
  align-items: center;
  width: 600px;
  height: 60px;
  flex: none;
  margin-bottom: 24px;
  padding-left: 18px;
  border: 1px solid #dedfdc;
  border-radius: 9px;
  background: #f7f8f3;
`;
const Submit = styled(Field)`
  justify-content: center;
  padding: 0;
  border: 0;
  margin-bottom: 18px;
  background: #cc9e7e;
`;
const Scrollbar = styled.div`
  display: flex;
  flex-direction: column;
  align-items: center;
  width: 22px;
  padding: 13px 0 9px;
  background: #fcfcfc;
`;
const Thumb = styled.i`
  width: 13px;
  height: 56px;
  margin: 458px 0 164px;
  border-radius: 7px;
  background: #8b8b8b;
`;

function Preview() {
  return (
    <PreviewPane>
      <PreviewBar>
        <Glyph $w={22}><ArrowLeft size={23} strokeWidth={1.500} /></Glyph>
        <Glyph $w={22} $ml={20}><ArrowRight size={23} strokeWidth={1.500} /></Glyph>
        <Glyph $w={22} $ml={21} $color="#e1e3ea"><Line $s={22}><path d="M22.500 12A10.500 10.500 0 1 1 20 5l2.800 3M23 .5V8.500h-8" /></Line></Glyph>
        <PreviewUrl>
          <Glyph $w={18}><Link size={18} strokeWidth={1.800} /></Glyph>
          <Label font={plex} ml={3} w={94} size={20} color={muted}>.replit.dev<UrlPart $strong>/</UrlPart></Label>
        </PreviewUrl>
        <Glyph $w={22} $ml={13}><Line $s={22}><path d="M19 7V3a1 1 0 0 0-1-1H2a1 1 0 0 0-1 1v11a1 1 0 0 0 1 1h10M9 15v5M4 20.500h8" /><rect x="16" y="10" width="7" height="12.500" rx="1" /></Line></Glyph>
        <Glyph $w={23} $ml={17}><Palette size={24} strokeWidth={1.400} /></Glyph>
        <PlexLabel ml={13} w={65} color={muted}>Theme</PlexLabel>
        <Glyph $w={22} $ml={17}><Wrench size={23} strokeWidth={1.500} /></Glyph>
        <Glyph $w={22} $ml={17}><ExternalMark /></Glyph>
      </PreviewBar>
      <Viewport>
        <Page>
          <Haze />
          <SiteHeader>
            <LogoDisc><Gem size={22} strokeWidth={2.300} /></LogoDisc>
            <Label font={serif} ml={12} w={196} size={27} weight={600} color="#cc9e7e" dy={1}>Artisanal Jewels</Label>
            <Glyph $w={24} $ml={150}><Search size={24} strokeWidth={1.900} /></Glyph>
            <Label font={inter} ml={54} w={56} size={21} weight={500} color="#0a0a0a">Login</Label>
            <SignUp><Label font={inter} w={79} size={21} weight={500}>Sign Up</Label></SignUp>
            <Glyph $w={24} $ml={36}><Heart size={24} strokeWidth={1.900} /></Glyph>
            <Glyph $w={24} $ml={48}><Line $s={24} $sw={1.900} strokeLinejoin="round" strokeLinecap="round"><path d="M6 2 3 6v14a2 2 0 0 0 2 2h14a2 2 0 0 0 2-2V6l-3-4ZM3 6h18M16 10a4 4 0 0 1-8 0" /></Line></Glyph>
            <Glyph $w={24} $ml={48}><Menu size={24} strokeWidth={1.900} /></Glyph>
          </SiteHeader>
          <Newsletter>
            <Glyph $w={48} $color="#cc9e7e"><Mail size={48} strokeWidth={2} /></Glyph>
            <Title><Label font={serif} w={180} size={30} weight={600} color="#0a0a0a">Stay Updated</Label></Title>
            <Copy>
              <Label font={inter} w={597} size={24} color="#737373">Subscribe to our newsletter for exclusive offers, new</Label>
              <Label font={inter} w={474} size={24} color="#737373">collection previews, and jewelry care tips.</Label>
            </Copy>
            <Field><Label font={inter} w={242} size={24} color="#737373" dy={1}>First Name (Optional)</Label></Field>
            <Field><Label font={inter} w={216} size={24} color="#737373" dy={1}>Your email address</Label></Field>
            <Submit><Label font={inter} w={102} size={21} weight={500}>Subscribe</Label></Submit>
            <Label font={inter} w={428} size={18} color="#737373">We respect your privacy. Unsubscribe at any time.</Label>
          </Newsletter>
        </Page>
        <Scrollbar>
          <svg width="14" height="10"><path d="M6 1Q7-.5 8 1l5.500 7q.8 2-1 2h-11q-1.800 0-1-2z" fill="#858585" /></svg>
          <Thumb />
          <svg width="14" height="11"><path d="M6 10q1 1.500 2 0l5.500-8q.8-2-1-2h-11Q-.3 0 .5 2z" fill="#858585" /></svg>
        </Scrollbar>
      </Viewport>
    </PreviewPane>
  );
}

/* ---------- taskbar ---------- */
const Taskbar = styled.footer`
  display: flex;
  align-items: center;
  height: 72px;
  flex: none;
  margin-top: 6px;
  padding: 0 0 2px 411px;
  border-top: 2px solid #494542;
  background: linear-gradient(90deg, #2f2616 0, #32231a 60px, #3b1d17 88px, #3a181d 125px, #42151d 180px, #3b181d 260px,
    #2f2024 330px, #292523 400px, #2b2220 480px, #27241f 640px, #2b2224 800px, #27241f 930px, #2b2223 1010px,
    #262520 1150px, #27261f 1300px, #282420 1460px, #26262a 1550px, #28232a 1650px, #38191f 1700px, #411c1d 1760px, #362014 1810px, #2f2515 1880px, #2f2515 100%);
`;
const SearchBox = styled.div`
  display: flex;
  align-items: center;
  width: 330px;
  height: 48px;
  margin-left: 20px;
  padding-left: 17px;
  border: 1.500px solid #5a5452;
  border-top-color: #6f6967;
  border-radius: 24px;
  background: #464140;
  color: #e9e9e9;
`;
const AppTile = styled.div`
  display: flex;
  flex-direction: column;
  align-items: center;
  width: 60px;
  height: 60px;
  flex: none;
  margin-left: 6px;
  padding-top: ${(p) => (p.$lit ? 11 : 12)}px;
  border: ${(p) => (p.$lit ? "1px solid #454340" : "0")};
  border-radius: 8px;
  background: ${(p) => p.$bg || "transparent"};
`;
const Running = styled.i`
  width: ${(p) => p.$w}px;
  height: 5px;
  flex: none;
  margin-top: 6px;
  border-radius: 3px;
  background: ${(p) => p.$c};
`;
const Clock = styled.div`
  display: flex;
  flex-direction: column;
  align-items: flex-end;
  width: 84px;
  margin-left: 23px;
`;

function TaskbarRow() {
  const art = { width: 36, height: 36, viewBox: "0 0 36 36", overflow: "visible" };
  return (
    <Taskbar>
      <svg {...art} width="35"><defs><linearGradient id="win" x1="0" y1="0" x2="1" y2="1"><stop offset="0" stopColor="#7af4ff" /><stop offset="1" stopColor="#0e94ff" /></linearGradient></defs><path d="M1 0h16.500v17.500H0V1zM18.500 0H35l1 1v16.500H18.500zM0 18.500h17.500V36H1l-1-1zM18.500 18.500H36V35l-1 1H18.500z" fill="url(#win)" /></svg>
      <SearchBox>
        <Line $s={23} $sw={2.800}><circle cx="10" cy="10" r="8.500" fill="#635e5d" /><path d="m16.500 17 6 6" strokeLinecap="round" /></Line>
        <Label ml={15} w={62} size={19} color="#d4d1d0">Search</Label>
      </SearchBox>
      <AppTile><svg {...art}><rect x="9" width="27" height="26" rx="1" fill="#f1f1f1" /><rect y="9" width="27" height="26" rx="1" fill="#5d5d5d" /><path d="M9 9h18v17H10a1 1 0 0 1-1-1z" fill="#b3b3b3" /></svg></AppTile>
      <AppTile><Glyph $w={35} $h={36}><CopilotMark /></Glyph></AppTile>
      <AppTile>
        <svg {...art}><defs><linearGradient id="pal" x1="0" y1="0" x2="0" y2="1"><stop offset="0" stopColor="#62e0fa" /><stop offset="1" stopColor="#1f97e4" /></linearGradient></defs><path d="M20 1c9 0 14.500 6 13.500 15-.8 10-6 19-15 19-5 0-6-3-4-6 1.500-3 0-4-3-2.500C5 30 0 27 1 19 2.500 8 11 1 20 1z" fill="url(#pal)" /><circle cx="6.500" cy="19" r="3.300" fill="#d9501e" /><circle cx="10.500" cy="11" r="3" fill="#3da91c" /><circle cx="18.500" cy="8" r="3.200" fill="#f3b900" /><circle cx="19" cy="20.500" r="2.300" fill="#17303f" /><path d="M25.500 17h4v17q-2 2-4 0z" fill="#b3690f" /><path d="M23 10h9l-1 6q-3.500 3-7 0z" fill="#efd9b4" /></svg>
      </AppTile>
      <AppTile>
        <svg {...art}><circle cx="19" cy="6.500" r="5.500" fill="#7b83eb" /><circle cx="30" cy="8.500" r="4" fill="#5059c9" /><path d="M24 14h12v10a6 6 0 0 1-12 4z" fill="#5059c9" /><path d="M11 14h17v13a8 8 0 0 1-17 0z" fill="#7b83eb" /><rect y="9" width="18" height="18" rx="1.500" fill="#4b53bc" /><text x="9" y="23" textAnchor="middle" fontFamily="Liberation Sans" fontWeight="700" fontSize="14" fill="#fff">T</text></svg>
      </AppTile>
      <AppTile>
        <svg {...art}><path d="M8 5h20v18l-10 9L8 23z" fill="#fff" /><g color="#ff3b0a"><SiBrave size={36} /></g></svg>
      </AppTile>
      <AppTile>
        <svg {...art}><circle cx="18" cy="18" r="18" fill="#fbc116" /><path d="M2.400 9H18l-6 13 6 14A18 18 0 0 1 2.400 9z" fill="#2da94f" /><path d="M2.400 9A18 18 0 0 1 33.600 9H18l-8 9z" fill="#e33b2e" /><path d="m25.500 22.500-7.500 13.500-3-10z" fill="#2da94f" /><circle cx="18" cy="18" r="9" fill="#fff" /><circle cx="18" cy="18" r="7" fill="#2f7df0" /></svg>
      </AppTile>
      <AppTile>
        <svg {...art}><path d="M0 3.500A1.500 1.500 0 0 1 1.500 2H11l3.500 4H34v6H0z" fill="#dd9a08" /><path d="M0 8h11l4-3h19.500A1.500 1.500 0 0 1 36 6.500V35H0z" fill="#ffcf4a" /><path d="M6 35V27a3 3 0 0 1 3-3h18a3 3 0 0 1 3 3v8z" fill="#0c6cc4" /><path d="M10 29h16" stroke="#084c94" strokeWidth="2" /></svg>
      </AppTile>
      <AppTile>
        <svg {...art}><path d="M26 0 2.500 22.500 0 26.500l3.500 2L27 9z" fill="#1284cf" /><path d="M3.500 7.500 0 9.500 .5 12 25 36l2-9z" fill="#1180c8" /><path d="M26 0l9 3.800a1.600 1.600 0 0 1 1 1.500v25.400a1.600 1.600 0 0 1-1 1.500L26 36z" fill="#25a5f2" /></svg>
        <Running $w={9} $c="#9b9997" />
      </AppTile>
      <AppTile $lit $bg="#33312e">
        <svg {...art}><defs><linearGradient id="edA" x1="0" y1="0" x2="1" y2=".3"><stop offset="0" stopColor="#1b9be2" /><stop offset=".5" stopColor="#2bbfd4" /><stop offset="1" stopColor="#58dc5c" /></linearGradient><linearGradient id="edB" x1="0" y1="0" x2="0" y2="1"><stop offset="0" stopColor="#1a9be0" /><stop offset="1" stopColor="#0f63c0" /></linearGradient></defs><path d="M18 0a18 18 0 1 0 15.500 27C25 28 17 22 20 14z" fill="url(#edB)" /><path d="M1 14C3 5 10 0 18 0c10 0 18 7 18 16 0 6-4 9-9 9-4 0-6-1.500-5.500-3 2.500-3 1.500-10-5.500-11C10 10 4 11 1 14z" fill="url(#edA)" /><path d="M15 13c-6 5-5 15 2 19.500 6 3.500 13 1 16.500-5.500-3 1.500-6 1.700-9 .8-5-1.800-7.500-7-5.500-13-1-1.500-2-2-4-1.800z" fill="#0d4a9a" /></svg>
        <Running $w={24} $c="#4cc2ff" />
      </AppTile>
      <AppTile>
        <svg {...art}><circle cx="18" cy="18" r="18" fill="#74b943" /><text x="19" y="27" textAnchor="middle" fontFamily="Liberation Sans" fontWeight="700" fontSize="39" fill="#fff" transform="rotate(-10 18 18)">µ</text></svg>
        <Running $w={9} $c="#9b9997" />
      </AppTile>
      <AppTile $bg="#84444a">
        <svg {...art}><path d="M4 30A18 18 0 1 1 32 30L24 17l-2.500 4L18 15l-4 6-2.500-3z" fill="#3f5fff" /></svg>
        <Running $w={48} $c="#ff99a4" />
      </AppTile>
      <Glyph $w={18} $ml={120}><Line $s={16} $h={9} $sw={2} viewBox="0 0 18 10"><path d="m1 9.500 8-8 8 8" /></Line></Glyph>
      <Glyph $w={25} $ml={26}><Line $s={25} $h={19} $sw={2} viewBox="0 0 25 19"><path d="M1 7a16 16 0 0 1 23 0M4.500 10.500a11.500 11.500 0 0 1 16 0M8 14a6.500 6.500 0 0 1 9 0" /><circle cx="12.500" cy="16.500" r="1.500" fill="currentColor" /></Line></Glyph>
      <Glyph $w={25} $ml={11}><Line $s={25} $h={20} $sw={1.800} viewBox="0 0 25 20"><path d="M1 7v6h4l6 5.500v-17L5 7zM14 7q2 3 0 6M16.500 4q5 6 0 12" /><path d="M19.500 1q8 9 0 18" stroke="#6d4a4d" /></Line></Glyph>
      <Glyph $w={25} $ml={11}><Line $s={25} $h={20} $sw={1.800} viewBox="0 0 25 20"><path d="M9 4h10a3 3 0 0 1 3 3v8a3 3 0 0 1-3 3H4a3 3 0 0 1-3-3v-4" /><path d="M10 6.500h9.500v9h-16V12H7z" fill="currentColor" stroke="none" /><path d="M5.500-1v4.500h4L3.500 10V6h-3z" fill="currentColor" stroke="none" /><path d="M23.500 9v4" strokeWidth="3" /></Line></Glyph>
      <Clock>
        <Label w={65} size={17.5}>7:53 PM</Label>
        <Label w={84} size={17.5}>9/19/2025</Label>
      </Clock>
    </Taskbar>
  );
}

export default function App() {
  return (
    <>
      <GlobalStyle />
      <Screen>
        <BrowserTabs />
        <AddressRow />
        <Bookmarks />
        <Workspace>
          <WorkspaceHeader />
          <Split>
            <ChatPane />
            <Preview />
          </Split>
        </Workspace>
        <TaskbarRow />
      </Screen>
    </>
  );
}
